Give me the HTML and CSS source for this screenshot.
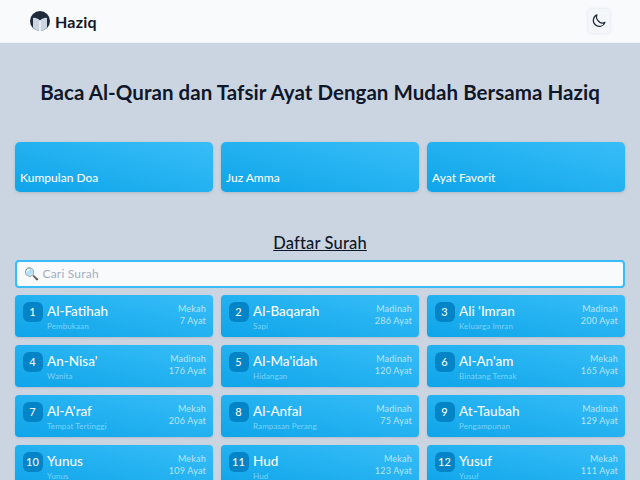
FILE: index.html
```html
<!DOCTYPE html>
<html lang="id">
<head>
<meta charset="utf-8">
<title>Haziq</title>
<link rel="stylesheet" href="styles.css">
</head>
<body>
<header class="navbar">
  <div class="brand">
    <svg class="logo" viewBox="0 0 20 20" width="20" height="20" aria-hidden="true">
      <circle cx="10" cy="10" r="10" fill="#1e293b"/>
      <path d="M3 7 C5 6.500 8 7.500 10 9.500 C12 7.500 15 6.500 17 7 L17 16.500 C15 19 12.500 20 10 20 C7.500 20 5 19 3 16.500 Z" fill="#cbd5e1"/>
      <path d="M10 9.500 L10 20" stroke="#f1f5f9" stroke-width="1.400"/>
    </svg>
    <span class="brand-name">Haziq</span>
  </div>
  <button class="theme-btn" aria-label="Tema">
    <svg viewBox="0 0 24 24" width="16" height="16" fill="none" stroke="#1e293b" stroke-width="1.800" stroke-linecap="round" stroke-linejoin="round"><path d="M21 14A9 9 0 1 1 9 2.800a8 8 0 0 0 2 9.200a8 8 0 0 0 10 2z"/></svg>
  </button>
</header>
<main class="content">
  <h1 class="title">Baca Al-Quran dan Tafsir Ayat Dengan Mudah Bersama Haziq</h1>
  <section class="features">
    <a class="feature">Kumpulan Doa</a>
    <a class="feature">Juz Amma</a>
    <a class="feature">Ayat Favorit</a>
  </section>
  <h2 class="list-title">Daftar Surah</h2>
  <input class="search" type="text" placeholder="🔍 Cari Surah">
  <section class="surah-grid">
    <article class="surah"><span class="num">1</span><div class="names"><div class="latin">Al-Fatihah</div><div class="meaning">Pembukaan</div></div><div class="meta"><div>Mekah</div><div>7 Ayat</div></div></article>
    <article class="surah"><span class="num">2</span><div class="names"><div class="latin">Al-Baqarah</div><div class="meaning">Sapi</div></div><div class="meta"><div>Madinah</div><div>286 Ayat</div></div></article>
    <article class="surah"><span class="num">3</span><div class="names"><div class="latin">Ali 'Imran</div><div class="meaning">Keluarga Imran</div></div><div class="meta"><div>Madinah</div><div>200 Ayat</div></div></article>
    <article class="surah"><span class="num">4</span><div class="names"><div class="latin">An-Nisa'</div><div class="meaning">Wanita</div></div><div class="meta"><div>Madinah</div><div>176 Ayat</div></div></article>
    <article class="surah"><span class="num">5</span><div class="names"><div class="latin">Al-Ma'idah</div><div class="meaning">Hidangan</div></div><div class="meta"><div>Madinah</div><div>120 Ayat</div></div></article>
    <article class="surah"><span class="num">6</span><div class="names"><div class="latin">Al-An'am</div><div class="meaning">Binatang Ternak</div></div><div class="meta"><div>Mekah</div><div>165 Ayat</div></div></article>
    <article class="surah"><span class="num">7</span><div class="names"><div class="latin">Al-A'raf</div><div class="meaning">Tempat Tertinggi</div></div><div class="meta"><div>Mekah</div><div>206 Ayat</div></div></article>
    <article class="surah"><span class="num">8</span><div class="names"><div class="latin">Al-Anfal</div><div class="meaning">Rampasan Perang</div></div><div class="meta"><div>Madinah</div><div>75 Ayat</div></div></article>
    <article class="surah"><span class="num">9</span><div class="names"><div class="latin">At-Taubah</div><div class="meaning">Pengampunan</div></div><div class="meta"><div>Madinah</div><div>129 Ayat</div></div></article>
    <article class="surah"><span class="num">10</span><div class="names"><div class="latin">Yunus</div><div class="meaning">Yunus</div></div><div class="meta"><div>Mekah</div><div>109 Ayat</div></div></article>
    <article class="surah"><span class="num">11</span><div class="names"><div class="latin">Hud</div><div class="meaning">Hud</div></div><div class="meta"><div>Mekah</div><div>123 Ayat</div></div></article>
    <article class="surah"><span class="num">12</span><div class="names"><div class="latin">Yusuf</div><div class="meaning">Yusuf</div></div><div class="meta"><div>Mekah</div><div>111 Ayat</div></div></article>
  </section>
</main>
</body>
</html>
```
FILE: styles.css
```css
* { box-sizing: border-box; }
html, body { margin: 0; height: 100%; overflow: hidden; }
body {
  background: #cbd5e1;
  font-family: "Lato", "Noto Sans", sans-serif;
  color: #0f172a;
}
.navbar {
  height: 43px;
  background: #f8fafc;
  border-bottom: 1px solid #f1f5f9;
  padding: 0 30px;
  display: flex;
  align-items: center;
  justify-content: space-between;
}
.brand { display: flex; align-items: center; gap: 5px; }
.logo { display: block; }
.brand-name { font-size: 16px; font-weight: 700; color: #0f172a; letter-spacing: .2px; }
.theme-btn {
  width: 22px;
  height: 24px;
  padding: 0;
  border: 0;
  border-radius: 4px;
  background: #f4f7fa;
  box-shadow: 0 0 3px rgba(148, 163, 184, .3);
  display: flex;
  align-items: center;
  justify-content: center;
}
.content { padding: 0 15px; }
.title {
  margin: 0;
  padding-top: 35px;
  height: 99px;
  font-size: 20.500px;
  line-height: 28px;
  font-weight: 700;
  text-align: center;
  letter-spacing: .05px;
}
.features { display: grid; grid-template-columns: repeat(3, 1fr); gap: 8px; }
.feature {
  height: 50px;
  border-radius: 5px;
  background: linear-gradient(to top right, #0ea5e9, #38bdf8);
  box-shadow: 0 1px 3px rgba(100, 116, 139, .3);
  color: #f8fafc;
  font-size: 12px;
  font-weight: 500;
  line-height: 16px;
  padding: 28px 5px 0;
}
.list-title {
  margin: 40px 0 0;
  height: 28px;
  font-size: 16.500px;
  line-height: 22px;
  font-weight: 500;
  text-align: center;
  text-decoration: underline;
  letter-spacing: .15px;
}
.search {
  display: block;
  width: 100%;
  height: 28px;
  border: 2px solid #38bdf8;
  border-radius: 4px;
  background: #f8fafc;
  padding: 0 7px 2px;
  font: 400 12px "Lato", sans-serif;
  letter-spacing: .2px;
  outline: none;
}
.search::placeholder { color: #a3afc0; opacity: 1; }
.surah-grid {
  margin-top: 7px;
  display: grid;
  grid-template-columns: repeat(3, 1fr);
  gap: 8px;
}
.surah {
  height: 42px;
  border-radius: 4px;
  background: linear-gradient(to top right, #0ea5e9, #38bdf8);
  box-shadow: 0 1px 2px rgba(100, 116, 139, .25);
  padding: 0 7px 0 7.500px;
  display: flex;
  align-items: center;
  color: #f8fafc;
}
.num {
  width: 20px;
  height: 20px;
  flex: none;
  margin-bottom: 8px;
  border-radius: 6px;
  background: #0284c7;
  font-size: 11px;
  font-weight: 500;
  line-height: 20px;
  text-align: center;
}
.names { margin-left: 4.500px; flex: 1; min-width: 0; }
.latin { font-size: 13.500px; line-height: 20px; font-weight: 500; }
.meaning { font-size: 8px; line-height: 10px; color: #7dd3fc; letter-spacing: .1px; }
.meta {
  text-align: right;
  margin-bottom: 2px;
  font-size: 9px;
  line-height: 12.500px;
  color: #bae6fd;
  letter-spacing: .2px;
}
```
